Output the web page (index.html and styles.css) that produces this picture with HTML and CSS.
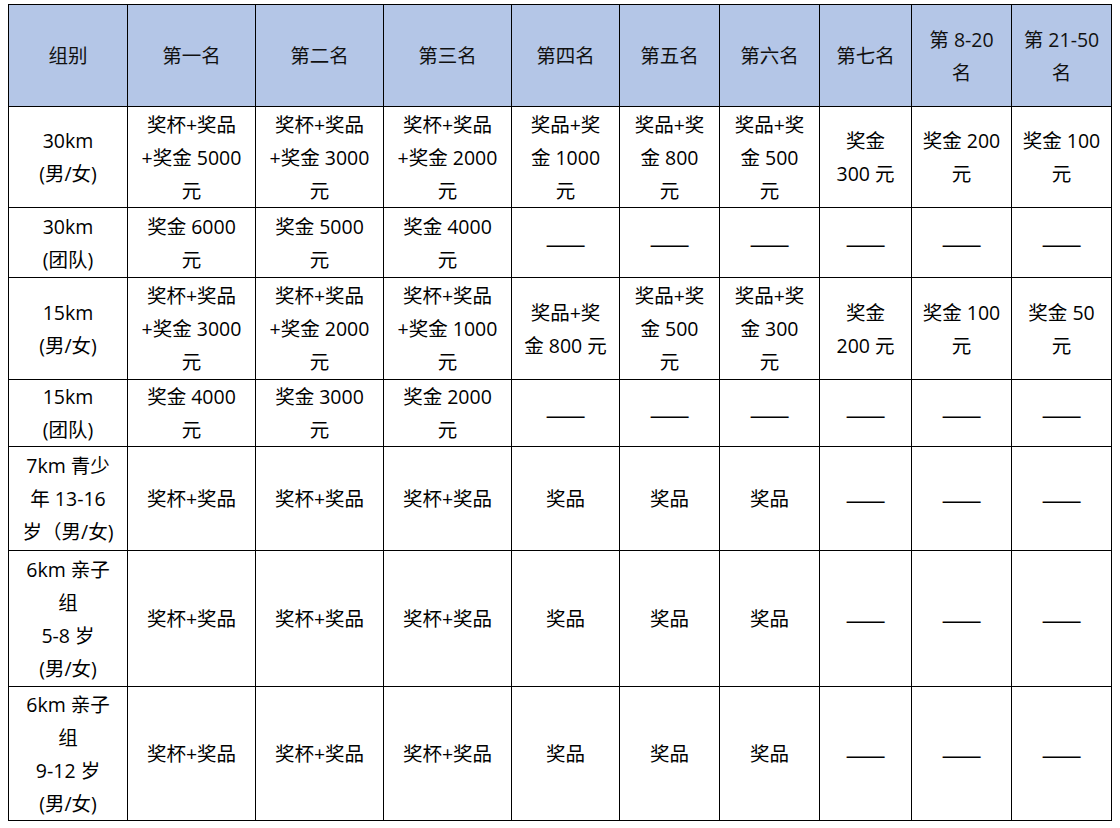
FILE: index.html
```html
<!DOCTYPE html>
<html lang="zh-CN">
<head>
<meta charset="utf-8">
<title>奖项设置</title>
<link rel="stylesheet" href="styles.css">
</head>
<body>
<table class="prize">
  <colgroup>
    <col class="c1"><col class="c2"><col class="c2"><col class="c2"><col class="c5"><col class="c6"><col class="c6"><col class="c9"><col class="c6"><col class="c6">
  </colgroup>
  <thead>
    <tr class="r-head">
      <th>组别</th><th>第一名</th><th>第二名</th><th>第三名</th><th>第四名</th><th>第五名</th><th>第六名</th><th>第七名</th><th>第 8-20<br>名</th><th>第 21-50<br>名</th>
    </tr>
  </thead>
  <tbody>
    <tr class="r1">
      <td>30km<br>(男/女)</td>
      <td>奖杯+奖品<br>+奖金 5000<br>元</td>
      <td>奖杯+奖品<br>+奖金 3000<br>元</td>
      <td>奖杯+奖品<br>+奖金 2000<br>元</td>
      <td>奖品+奖<br>金 1000<br>元</td>
      <td>奖品+奖<br>金 800<br>元</td>
      <td>奖品+奖<br>金 500<br>元</td>
      <td>奖金<br>300 元</td>
      <td>奖金 200<br>元</td>
      <td>奖金 100<br>元</td>
    </tr>
    <tr class="r2">
      <td>30km<br>(团队)</td>
      <td>奖金 6000<br>元</td>
      <td>奖金 5000<br>元</td>
      <td>奖金 4000<br>元</td>
      <td class="dash">——</td><td class="dash">——</td><td class="dash">——</td><td class="dash">——</td><td class="dash">——</td><td class="dash">——</td>
    </tr>
    <tr class="r3">
      <td>15km<br>(男/女)</td>
      <td>奖杯+奖品<br>+奖金 3000<br>元</td>
      <td>奖杯+奖品<br>+奖金 2000<br>元</td>
      <td>奖杯+奖品<br>+奖金 1000<br>元</td>
      <td>奖品+奖<br>金 800 元</td>
      <td>奖品+奖<br>金 500<br>元</td>
      <td>奖品+奖<br>金 300<br>元</td>
      <td>奖金<br>200 元</td>
      <td>奖金 100<br>元</td>
      <td>奖金 50<br>元</td>
    </tr>
    <tr class="r4">
      <td>15km<br>(团队)</td>
      <td>奖金 4000<br>元</td>
      <td>奖金 3000<br>元</td>
      <td>奖金 2000<br>元</td>
      <td class="dash">——</td><td class="dash">——</td><td class="dash">——</td><td class="dash">——</td><td class="dash">——</td><td class="dash">——</td>
    </tr>
    <tr class="r5">
      <td>7km 青少<br>年 13-16<br>岁（男/女)</td>
      <td>奖杯+奖品</td><td>奖杯+奖品</td><td>奖杯+奖品</td>
      <td>奖品</td><td>奖品</td><td>奖品</td>
      <td class="dash">——</td><td class="dash">——</td><td class="dash">——</td>
    </tr>
    <tr class="r6">
      <td>6km 亲子<br>组<br>5-8 岁<br>(男/女)</td>
      <td>奖杯+奖品</td><td>奖杯+奖品</td><td>奖杯+奖品</td>
      <td>奖品</td><td>奖品</td><td>奖品</td>
      <td class="dash">——</td><td class="dash">——</td><td class="dash">——</td>
    </tr>
    <tr class="r7">
      <td>6km 亲子<br>组<br>9-12 岁<br>(男/女)</td>
      <td>奖杯+奖品</td><td>奖杯+奖品</td><td>奖杯+奖品</td>
      <td>奖品</td><td>奖品</td><td>奖品</td>
      <td class="dash">——</td><td class="dash">——</td><td class="dash">——</td>
    </tr>
  </tbody>
</table>
</body>
</html>
```

FILE: styles.css
```css
html, body {
  margin: 0;
  padding: 0;
  background: #ffffff;
}

body {
  padding: 4px 0 0 8px;
  font-family: "Open Sans", "Noto Sans CJK SC", sans-serif;
  font-size: 19.5px;
  color: #000000;
}

.prize {
  border-collapse: collapse;
  table-layout: fixed;
  width: 1103px;
}

.c1 { width: 119px; }
.c2 { width: 128px; }
.c5 { width: 108px; }
.c6 { width: 100px; }
.c9 { width: 92px; }

.prize th,
.prize td {
  border: 1px solid #000000;
  padding: 0;
  text-align: center;
  vertical-align: middle;
  line-height: 33px;
  white-space: nowrap;
  font-weight: normal;
}

.prize th {
  background: #b4c6e7;
  color: #111111;
}

.prize td.dash {
  font-family: "Noto Sans CJK SC", sans-serif;
  font-size: 24px;
}

.r-head th { height: 101px; }
.r1 td { height: 100px; }
.r2 td { height: 69px; }
.r3 td { height: 101px; }
.r4 td { height: 66px; }
.r5 td { height: 103px; }
.r6 td { height: 135px; }
.r7 td { height: 133px; }
```
